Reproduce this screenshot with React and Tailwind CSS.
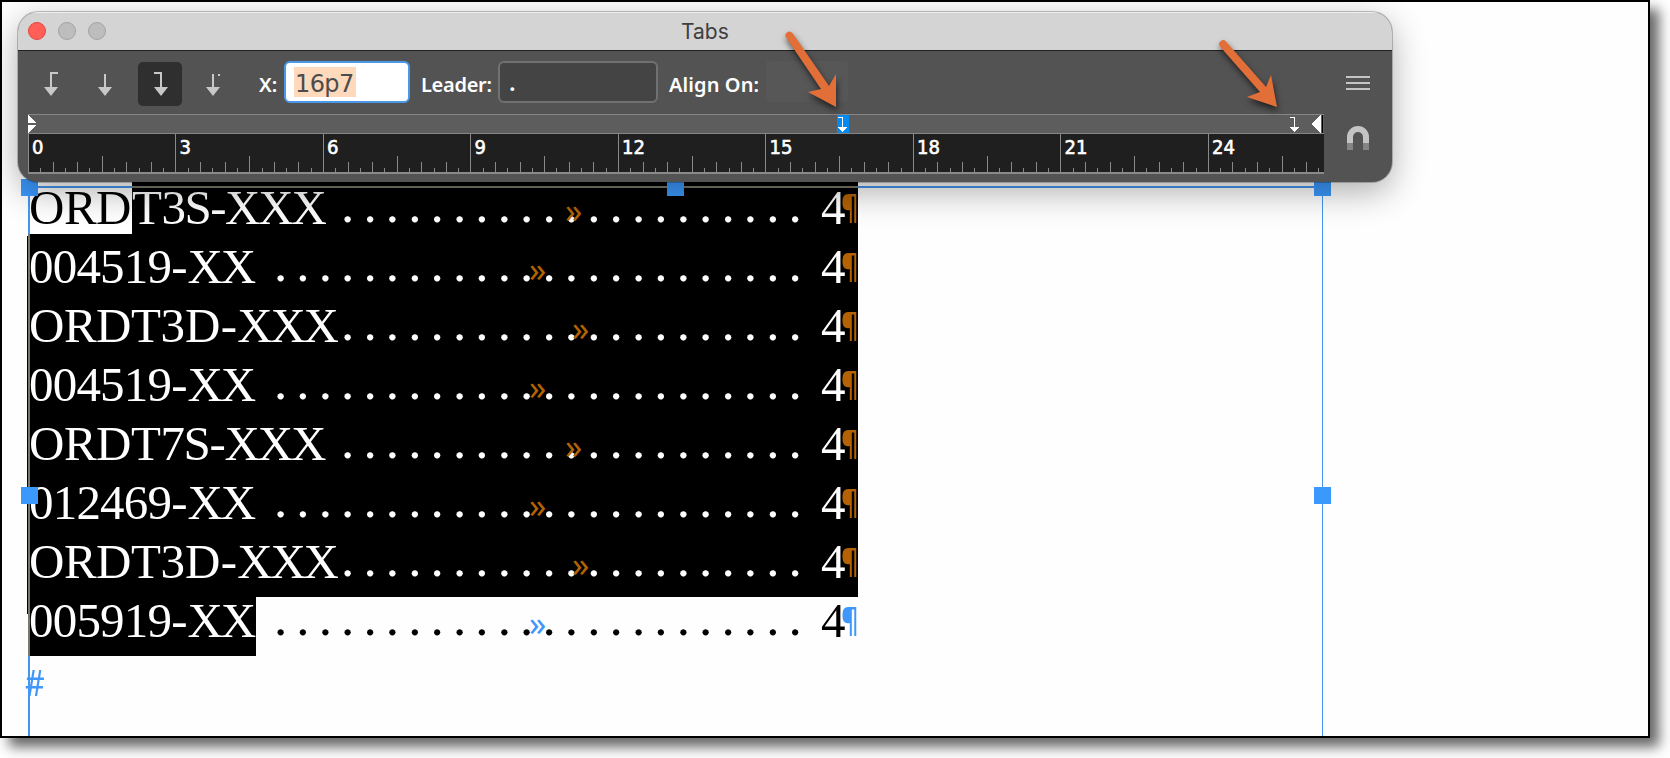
import React from 'react';
import clsx from 'clsx';

const rows = [
  { id: 1, parts: ['ORDT', '3S-', 'XXX'], dots: 21, mark: 566, fit: 'tracking-[-1.5px]' },
  { id: 2, parts: ['004519', '-', 'XX'], dots: 24, mark: 530 },
  { id: 3, parts: ['ORDT', '3D-', 'XXX'], dots: 21, mark: 573, fit: 'tracking-[0.2px]' },
  { id: 4, parts: ['004519', '-', 'XX'], dots: 24, mark: 530 },
  { id: 5, parts: ['ORDT', '7S-', 'XXX'], dots: 21, mark: 566, fit: 'tracking-[-1.3px]' },
  { id: 6, parts: ['012469', '-', 'XX'], dots: 24, mark: 530 },
  { id: 7, parts: ['ORDT', '3D-', 'XXX'], dots: 21, mark: 573, fit: 'tracking-[0.2px]' },
  { id: 8, parts: ['005919', '-', 'XX'], dots: 24, mark: 530, last: true },
];

const ticks = Array.from({ length: 106 }, (_, i) => i);
const picas = [0, 3, 6, 9, 12, 15, 18, 21, 24];

function TabIcon({ type }) {
  return (
    <svg width="44" height="44" viewBox="0 0 44 44" fill="none" stroke="#c8c8c8" strokeWidth="2">
      {type === 'left' && <path d="M28 11H21V26" />}
      {type === 'center' && <path d="M21 12V26" />}
      {type === 'right' && <path d="M16 11H23V26" />}
      {type === 'decimal' && <path d="M21 12V26M26 13H28" />}
      <path d={type === 'right' ? 'M16 25H30L23 34Z' : 'M14 25H28L21 34Z'} fill="#c8c8c8" stroke="none" />
    </svg>
  );
}

function StopMarker() {
  return (
    <svg width="12" height="18" viewBox="0 0 12 18" shapeRendering="crispEdges">
      <path d="M1 2.5H5.5V13" fill="none" stroke="#fff" />
      <path d="M1 12H10L5.5 17Z" fill="#fff" />
    </svg>
  );
}

function Pointer({ className, d }) {
  return (
    <svg className={clsx('absolute z-20 drop-shadow-[1px_4px_3px_rgba(0,0,0,0.6)]', className)} width="70" height="90" viewBox="0 0 70 90">
      <path d={d} fill="#e36f38" />
    </svg>
  );
}

function Handle({ className }) {
  return <span className={clsx('absolute size-[17px] bg-[#3b99fe]', className)} />;
}

function Ruler() {
  return (
    <div className="w-[1296px]">
      <div className="relative flex h-[20px] justify-between border-y border-[#858585] bg-[#5d5d5d]">
        <svg width="8" height="18" viewBox="0 0 8 18" fill="#fff" shapeRendering="crispEdges">
          <path d="M0 0L8 8H0ZM0 10H8L0 18Z" />
        </svg>
        <svg width="13" height="18" viewBox="0 0 13 18" shapeRendering="crispEdges">
          <path d="M10 0V18L0 9Z" fill="#fff" />
          <path d="M11 0H12V18H11Z" fill="#000" />
        </svg>
        <span className="absolute top-0 left-[809px] w-[12px] bg-[#078af0]"><StopMarker /></span>
        <span className="absolute top-0 left-[1261px]"><StopMarker /></span>
      </div>
      <div className="relative h-[40px] border-b-2 border-[#8a8a8a] bg-[#1f1f1f]">
        <svg width="1296" height="38" shapeRendering="crispEdges">
          {ticks.map((i) => (
            <rect
              key={i}
              x={Math.round(i * 12.29)}
              y={i % 12 === 0 ? 0 : i % 6 === 0 ? 22 : i % 2 === 0 ? 28 : 34}
              width="1"
              height="38"
              fill="#8a8a8a"
            />
          ))}
        </svg>
        {picas.map((n) => (
          <span
            key={n}
            className="absolute top-0 pl-[4px] font-['DejaVu_Sans_Condensed','DejaVu_Sans',sans-serif] text-[20px] leading-[26px] text-white [-webkit-text-stroke:0.6px_white]"
            style={{ left: n * 49.17 }}
          >
            {n}
          </span>
        ))}
      </div>
    </div>
  );
}

function TabsPanel() {
  return (
    <section className="relative z-10 mt-[10px] ml-[16px] flex h-[170px] w-[1374px] flex-col overflow-hidden rounded-[20px] bg-[#535353] shadow-[0_0_0_1px_rgba(0,0,0,0.22),0_10px_34px_rgba(0,0,0,0.32)]">
      <header className="grid h-[39px] grid-cols-[1fr_48px_1fr] items-center border-t border-b border-t-[#eee] border-b-[#222] bg-[#d4d4d4] pr-[12px]">
        <div className="flex gap-[12px] pb-px pl-[10px]">
          <span className="size-[18px] rounded-full border border-[#e2463f] bg-[#ff5f57]" />
          <span className="size-[18px] rounded-full border border-[#a3a3a3] bg-[#bdbdbd]" />
          <span className="size-[18px] rounded-full border border-[#a3a3a3] bg-[#bdbdbd]" />
        </div>
        <h1 className="pl-[6px] pb-px text-center font-[Inter,sans-serif] text-[21px] leading-none text-[#3f3f3f]">Tabs</h1>
      </header>
      <div className="flex flex-1">
        <div className="flex w-[1306px] flex-col pl-[10px]">
          <div className="flex h-[63px] items-center pb-[2px] font-['Noto_Sans',sans-serif] text-[20px] font-semibold text-white">
            <div className="flex gap-[10px] pt-[4px] pl-[2px]">
              <span className="size-[44px]"><TabIcon type="left" /></span>
              <span className="size-[44px]"><TabIcon type="center" /></span>
              <span className="size-[44px] rounded-[5px] bg-[#2f2f2f]"><TabIcon type="right" /></span>
              <span className="size-[44px]"><TabIcon type="decimal" /></span>
            </div>
            <span className="ml-[23px] w-[25px] pt-[6px]">X:</span>
            <div className="flex h-[42px] w-[126px] items-center rounded-[6px] border-2 border-[#4a98ea] bg-white pl-[8px]">
              <span className="h-[30px] w-[62px] bg-[#ffd9bb] px-[1px] font-['DejaVu_Sans',sans-serif] text-[24px] leading-[34px] font-normal tracking-[-0.6px] text-[#4c4c4c]">16p7</span>
            </div>
            <span className="ml-[11px] w-[77px] pt-[6px] tracking-[-0.3px]">Leader:</span>
            <div className="flex h-[42px] w-[160px] items-center rounded-[6px] border-2 border-[#717171] bg-[#444] pl-[9px] text-[24px]">.</div>
            <span className="ml-[11px] w-[97px] pt-[6px] tracking-[0.1px] whitespace-nowrap">Align On:</span>
            <div className="h-[41px] w-[82px] rounded-[3px] bg-[#575757]" />
          </div>
          <Ruler />
        </div>
        <div className="flex w-[68px] flex-col items-center pt-[25px]">
          <svg width="24" height="14" viewBox="0 0 24 14" fill="#c4c4c4">
            <path d="M0 0H24V2H0ZM0 6H24V8H0ZM0 12H24V14H0Z" />
          </svg>
          <svg className="mt-[36px]" width="22" height="24" viewBox="0 0 22 24">
            <path d="M0 17V11A11 11 0 0 1 22 11V17H16V11A5 5 0 0 0 6 11V17Z" fill="#c4c4c4" />
            <path d="M0 17H6V24H0ZM16 17H22V24H16Z" fill="#858585" />
          </svg>
        </div>
      </div>
    </section>
  );
}

function Row({ row }) {
  const [head, middle, tail] = row.parts;
  return (
    <div className={clsx('relative flex h-[59px] w-[830px] leading-[47px]', row.last ? 'text-black' : 'bg-black text-white')}>
      <div className={clsx('h-[59px] whitespace-nowrap', row.last && 'w-[228px] bg-black text-white')}>
        {row.id === 1 ? (
          <span className="tracking-[-0.5px]">
            <span className="-mt-[2px] inline-block h-[52px] w-[104px] bg-white pt-[2px] pl-px align-top text-black">ORD</span>
            {head.slice(3)}
          </span>
        ) : (
          <span className={clsx('pl-px', row.fit ? 'tracking-[-0.5px]' : 'tracking-[-0.8px]')}>{head}</span>
        )}
        <span className={row.fit}>{middle}</span>
        <span className="tracking-[-2.2px]">{tail}</span>
      </div>
      <div className="-mr-[9px] flex flex-1 justify-end text-[53px] leading-[41px] tracking-[9.13px] whitespace-nowrap">{'.'.repeat(row.dots)}</div>
      <div className="flex w-[56px] justify-end">
        <span className="w-[20px]">4</span>
        <span className={clsx("w-[17px] origin-left font-['Noto_Sans',sans-serif] text-[32px] leading-[46px] font-semibold scale-x-[0.85]", row.last ? 'text-[#3f97fb]' : 'text-[#b46204]')}>¶</span>
      </div>
      <span
        className={clsx("absolute top-0 font-['Noto_Sans',sans-serif] text-[34px] leading-[53px]", row.last ? 'text-[#3f97fb]' : 'text-[#b46204]')}
        style={{ left: row.mark - 29 }}
      >
        »
      </span>
    </div>
  );
}

export default function App() {
  return (
    <div className="h-[758px] w-[1670px] overflow-hidden bg-white">
      <main className="relative h-[738px] w-[1650px] overflow-visible border-2 border-black bg-[#fefefe] shadow-[9px_9px_12px_rgba(0,0,0,0.6)]">
        <TabsPanel />
        <Pointer className="top-[29px] left-[782px]" d="M1.5 5.500A4 4 0 0 1 8.500 2L45 55L52 43L52 76L24 61L37 58Z" />
        <Pointer className="top-[37px] left-[1216px]" d="M1.500 7A4 4 0 0 1 8 2.500L48 48L53 36L59 68L29 58L42 53Z" />
        <div className="relative ml-[26px] h-[554px] w-[1295px] border-t-2 border-transparent font-['Liberation_Serif',serif] text-[49px]">
          <div className="absolute -top-[2px] left-[104px] h-[2px] w-[726px] bg-black" />
          {rows.map((row) => (
            <Row key={row.id} row={row} />
          ))}
          <p className="-ml-[3px] w-[30px] origin-left scale-x-[0.85] pt-[8px] font-['Noto_Sans',sans-serif] text-[36px] leading-[38px] text-[#3f97fb]">#</p>

          {/* text frame edges: blue on paper, grey where the selection inverts them */}
          <span className="absolute top-[2px] left-0 h-[2px] w-full bg-[#4397ee]" />
          <span className="absolute top-[2px] left-[104px] h-[2px] w-[726px] bg-[#77776b]" />
          <span className="absolute top-[2px] left-0 h-[550px] w-[2px] bg-[#4397ee]" />
          <span className="absolute top-[50px] left-0 h-[422px] w-[2px] bg-[#77776b]" />
          <span className="absolute top-[52px] -left-px h-[378px] w-px bg-black" />
          <span className="absolute top-[2px] right-0 h-[550px] w-px bg-[#4397ee]" />
          <Handle className="-top-[5px] -left-[7px]" />
          <Handle className="-top-[5px] left-[639px]" />
          <Handle className="-top-[5px] left-[1286px]" />
          <Handle className="top-[303px] -left-[7px]" />
          <Handle className="top-[303px] left-[1286px]" />
        </div>
      </main>
    </div>
  );
}
